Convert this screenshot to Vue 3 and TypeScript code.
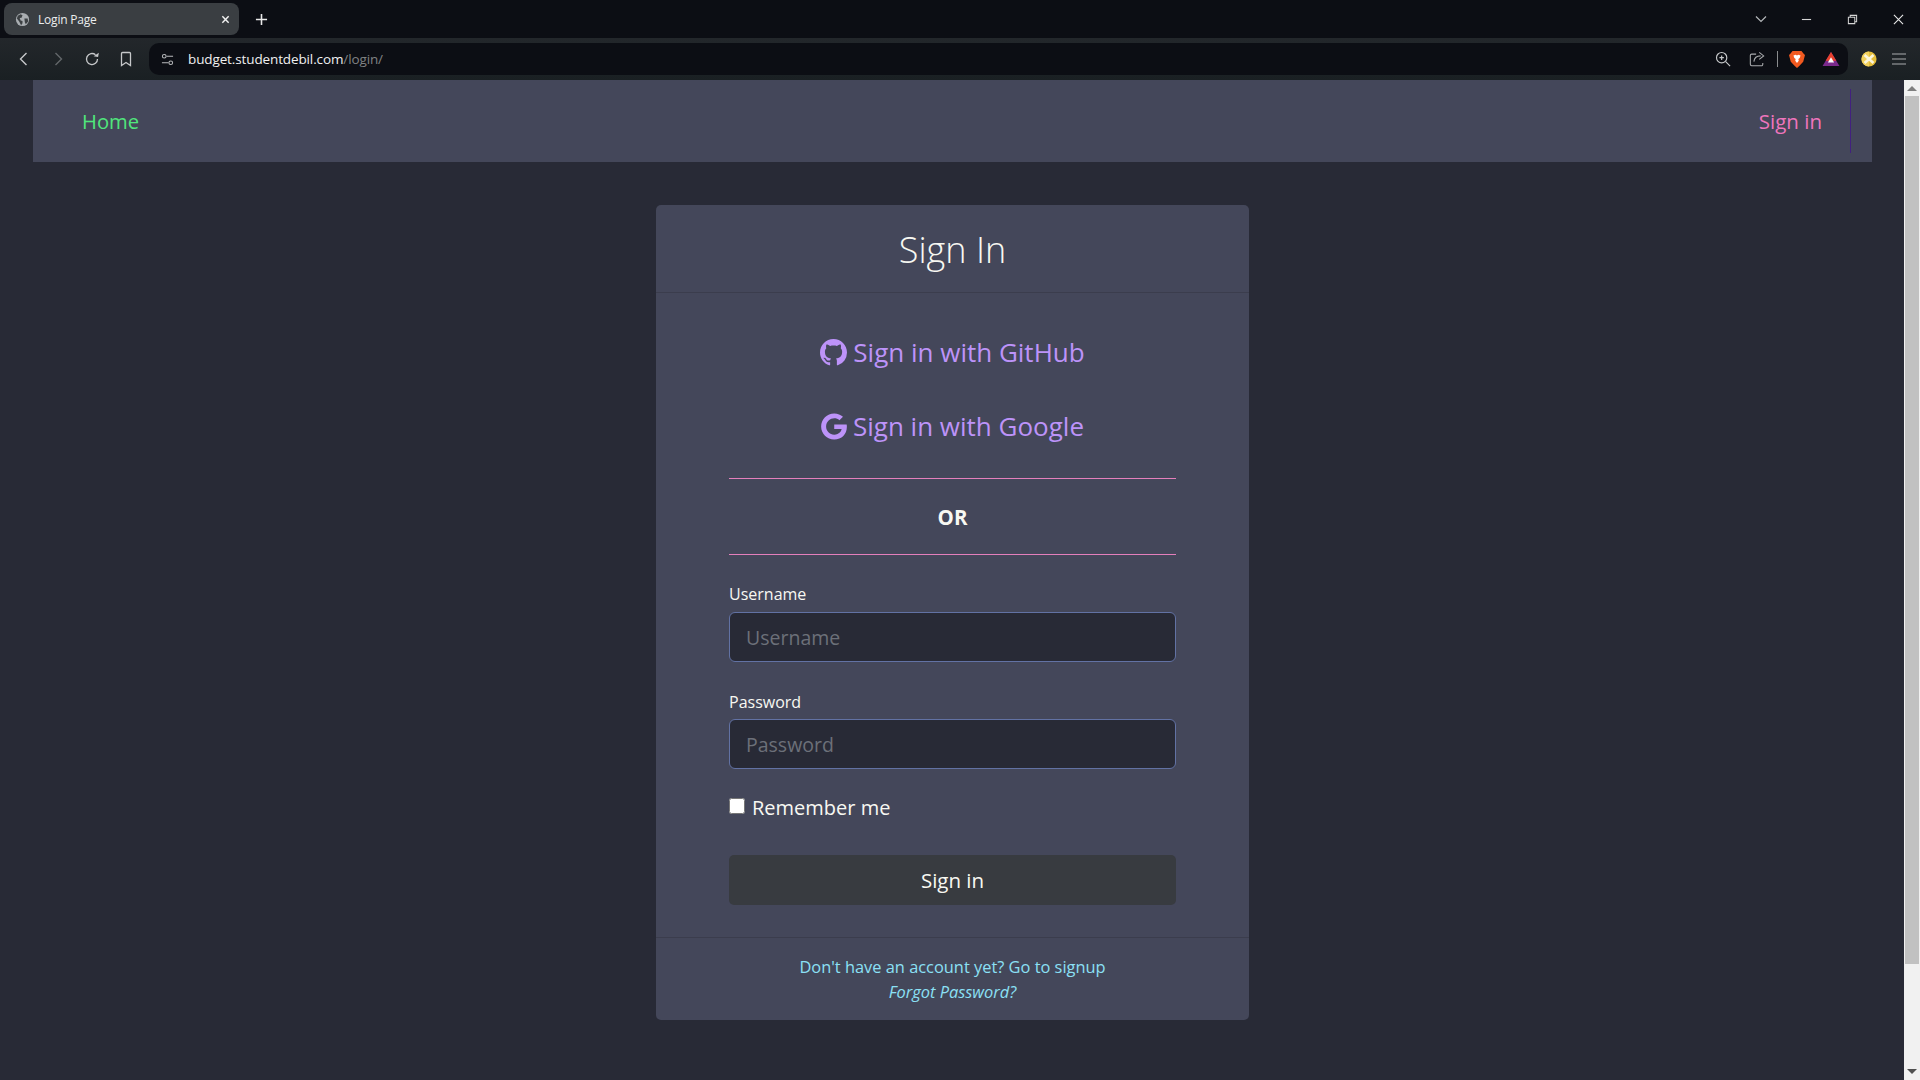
<script setup lang="ts">
import { ref } from 'vue'
const username = ref<string>('')
const password = ref<string>('')
const remember = ref<boolean>(false)
</script>

<template>
  <div class="window">
    <div class="tabstrip">
      <div class="tab">
        <svg class="globe" viewBox="0 0 16 16"><circle cx="8" cy="8" r="7" fill="#a9adb1"/><path d="M3 4l3-1.500 2 1-1 2.500-2 .5 1 2.500 2 .5 0 2.500-1.500 2L4.500 10 2 7z M10 7h3.500l.5 3-2.500 3-1-2z" fill="#3c4043"/></svg>
        <span class="tab-title">Login Page</span>
        <svg class="tab-x" viewBox="0 0 10 10"><path d="M1.500 1.500l7 7M8.500 1.500l-7 7" stroke="#f2f2f2" stroke-width="1.600"/></svg>
      </div>
      <svg class="plus" viewBox="0 0 14 14"><path d="M7 1v12M1 7h12" stroke="#e8e8e8" stroke-width="1.700"/></svg>
      <div class="grow"></div>
      <svg class="chev" viewBox="0 0 12 8"><path d="M1 1.500l5 5 5-5" fill="none" stroke="#b4b7ba" stroke-width="1.200"/></svg>
      <svg class="win-btn" viewBox="0 0 12 12"><path d="M1 6h10" stroke="#d5d5d5" stroke-width="1.200"/></svg>
      <svg class="win-btn" viewBox="0 0 12 12"><path d="M1.500 3.500h7v7h-7zM3.500 3.500V1.500h7v7h-2" fill="none" stroke="#d5d5d5" stroke-width="1.100"/></svg>
      <svg class="win-btn last" viewBox="0 0 12 12"><path d="M1 1l10 10M11 1L1 11" stroke="#e8e8e8" stroke-width="1.200"/></svg>
    </div>

    <div class="toolbar">
      <svg class="tool" viewBox="0 0 16 16"><path d="M10.500 2L4.500 8l6 6" fill="none" stroke="#c6c8ca" stroke-width="1.400"/></svg>
      <svg class="tool" viewBox="0 0 16 16"><path d="M5.500 2l6 6-6 6" fill="none" stroke="#63676a" stroke-width="1.400"/></svg>
      <svg class="tool" viewBox="0 0 16 16"><path d="M13.500 8A5.500 5.500 0 1 1 11.500 3.800" fill="none" stroke="#c6c8ca" stroke-width="1.300"/><path d="M9.500 5.500h5v-5z" fill="#c6c8ca" transform="rotate(10 12 4) scale(.9) translate(1.500 .8)"/></svg>
      <svg class="tool" viewBox="0 0 16 16"><path d="M3.500 2.500a1 1 0 0 1 1-1h7a1 1 0 0 1 1 1v12L8 11.500 3.500 14.500z" fill="none" stroke="#c6c8ca" stroke-width="1.300"/></svg>
      <div class="address">
        <svg class="tune" viewBox="0 0 14 14"><g fill="none" stroke="#b9bbbd" stroke-width="1.100"><circle cx="3.500" cy="3.500" r="2"/><path d="M6 3.500h7M1 10.500h7"/><circle cx="10.500" cy="10.500" r="2"/></g></svg>
        <span class="url">budget.studentdebil.com<span class="url-path">/login/</span></span>
        <div class="grow"></div>
        <svg class="addr-icon" viewBox="0 0 18 18"><g fill="none" stroke="#c6c8ca" stroke-width="1.300"><circle cx="7.500" cy="7.500" r="5.800"/><path d="M12 12l5 5M7.500 5v5M5 7.500h5"/></g></svg>
        <svg class="addr-icon share" viewBox="0 0 18 18"><path d="M8 3.500H3a1.500 1.500 0 0 0-1.500 1.500v10a1.500 1.500 0 0 0 1.500 1.500h11a1.500 1.500 0 0 0 1.500-1.500v-1.500M5.500 12C6 7.500 9 5.500 13 5.500M11.500 1.500l5 4-5 4" fill="none" stroke="#a9abad" stroke-width="1.200"/></svg>
        <div class="addr-sep"></div>
        <svg class="brave" viewBox="0 0 18 20"><path d="M4 1h10l2.500 3L18 5.500 16 13l-4.500 5L9 20l-2.500-2L2 13 0 5.500 1.500 4z" fill="#f1591f"/><path d="M5 6l2.500-.8L9 6l1.500-.8L13 6l-1 3-1.500 1L11 12l-2 2.500L7 12l.500-2L6 9z" fill="#fff"/></svg>
        <svg class="bat" viewBox="0 0 20 18"><path d="M10 1l9.500 16H.5z" fill="#7b2a8c"/><path d="M10 1l6 10H4z" fill="#e8412c"/><path d="M10 7l3.500 6h-7z" fill="#fff"/></svg>
      </div>
      <svg class="wallet" viewBox="0 0 18 18"><circle cx="9" cy="9" r="8.500" fill="#e5bd3a"/><path d="M9 .5A8.500 8.500 0 0 0 .5 9 8.500 8.500 0 0 0 9 17.500z" fill="#f2d15c"/><path d="M4 4.500l10 9M14 4.500l-10 9" stroke="#fbf6dc" stroke-width="3"/></svg>
      <svg class="menu" viewBox="0 0 14 12"><path d="M0 1h14M0 6h14M0 11h14" stroke="#a9abad" stroke-width="1.100"/></svg>
    </div>

    <div class="viewport">
      <div class="page">
        <nav class="navbar">
          <a class="nav-home">Home</a>
          <div class="grow"></div>
          <a class="nav-signin">Sign in</a>
          <div class="nav-rule"></div>
        </nav>

        <div class="card">
          <header class="card-head">
            <h1>Sign In</h1>
          </header>

          <div class="card-body">
            <a class="social first">
              <svg class="gh" viewBox="0 0 16 16"><path fill="currentColor" d="M8 0C3.580 0 0 3.580 0 8c0 3.540 2.290 6.530 5.470 7.590.4.070.55-.17.55-.38 0-.19-.01-.82-.01-1.490-2.010.37-2.530-.49-2.690-.94-.09-.23-.48-.94-.82-1.130-.28-.15-.68-.52-.01-.53.63-.01 1.080.58 1.230.82.72 1.210 1.870.87 2.330.66.070-.52.28-.87.51-1.070-1.780-.2-3.640-.89-3.640-3.950 0-.87.31-1.590.82-2.150-.08-.2-.36-1.020.08-2.120 0 0 .67-.21 2.200.82.64-.18 1.320-.27 2-.27.68 0 1.360.09 2 .27 1.530-1.040 2.200-.82 2.200-.82.44 1.100.16 1.920.08 2.120.51.56.82 1.270.82 2.150 0 3.070-1.870 3.750-3.650 3.950.29.25.54.73.54 1.480 0 1.070-.01 1.930-.01 2.200 0 .21.15.46.55.38A8.013 8.013 0 0 0 16 8c0-4.420-3.580-8-8-8z"/></svg>
              <span>Sign in with GitHub</span>
            </a>
            <a class="social">
              <svg class="gg" viewBox="0 0 488 512"><path fill="currentColor" d="M488 261.800C488 403.300 391.100 504 248 504 110.800 504 0 393.200 0 256S110.800 8 248 8c66.800 0 123 24.500 166.300 64.900l-67.500 64.900C258.500 52.600 94.300 116.600 94.300 256c0 86.500 69.100 156.600 153.700 156.600 98.200 0 135-70.400 140.800-106.900H248v-85.300h236.100c2.300 12.700 3.900 24.900 3.900 41.400z"/></svg>
              <span>Sign in with Google</span>
            </a>

            <div class="or">OR</div>

            <label class="field-label" for="u">Username</label>
            <input id="u" v-model="username" class="input" type="text" placeholder="Username" />

            <label class="field-label second" for="p">Password</label>
            <input id="p" v-model="password" class="input" type="password" placeholder="Password" />

            <label class="remember">
              <input v-model="remember" class="check" type="checkbox" />
              <span>Remember me</span>
            </label>

            <button class="submit" type="button">Sign in</button>
          </div>

          <footer class="card-foot">
            <a class="foot-link">Don't have an account yet? Go to signup</a>
            <a class="foot-link italic">Forgot Password?</a>
          </footer>
        </div>
      </div>

      <div class="scrollbar">
        <div class="arrow up"></div>
        <div class="thumb"></div>
        <div class="grow"></div>
        <div class="arrow down"></div>
      </div>
    </div>
  </div>
</template>

<style>
html, body { margin: 0; background: #282a36; overflow: hidden; }
</style>

<style scoped>
.window {
  width: 1920px;
  height: 1080px;
  display: flex;
  flex-direction: column;
  overflow: hidden;
  font-family: "Open Sans", "Noto Sans", sans-serif;
}
.grow { flex: 1; }

.tabstrip {
  height: 38px;
  flex: none;
  box-sizing: border-box;
  padding: 3px 0 3px 4px;
  display: flex;
  align-items: center;
  background: #0c0e14;
}
.tab {
  width: 235px;
  height: 32px;
  box-sizing: border-box;
  padding: 0 7px 0 11px;
  display: flex;
  align-items: center;
  border-radius: 8px;
  background: #3a3e42;
}
.globe { width: 15px; height: 15px; flex: none; }
.tab-title {
  margin-left: 8px;
  flex: 1;
  font-size: 12px;
  letter-spacing: -0.2px;
  color: #eceded;
}
.tab-x { width: 9px; height: 9px; flex: none; margin-right: 2px; }
.plus { width: 13px; height: 13px; margin-left: 16px; flex: none; }
.chev { width: 12px; height: 8px; margin-right: 34px; flex: none; }
.win-btn { width: 11px; height: 11px; margin-right: 35px; flex: none; }
.win-btn.last { margin-right: 16px; }

.toolbar {
  height: 42px;
  flex: none;
  box-sizing: border-box;
  padding: 0 0 0 16px;
  display: flex;
  align-items: center;
  background: linear-gradient(#23272b, #1a2023);
}
.tool { width: 16px; height: 16px; margin-right: 18px; flex: none; }
.tool:nth-child(4) { margin-right: 15px; }
.address {
  width: 1699px;
  height: 32px;
  flex: none;
  box-sizing: border-box;
  padding: 0 8px 0 12px;
  display: flex;
  align-items: center;
  border-radius: 10px;
  background: #0c0e14;
}
.tune { width: 13px; height: 13px; flex: none; }
.url {
  margin-left: 14px;
  font-size: 13.500px;
  letter-spacing: -0.12px;
  color: #f0f0f0;
}
.url-path { color: #808284; }
.addr-icon { width: 16px; height: 16px; margin-right: 18px; flex: none; }
.addr-icon.share { margin-right: 12px; }
.addr-sep { width: 1px; height: 16px; background: #8a8c8e; margin-right: 11px; }
.brave { width: 16px; height: 18px; margin-right: 17px; flex: none; }
.bat { width: 18px; height: 16px; flex: none; }
.wallet { width: 16px; height: 16px; margin-left: 13px; flex: none; }
.menu { width: 14px; height: 12px; margin-left: 15px; flex: none; }

.viewport {
  flex: 1;
  min-height: 0;
  display: flex;
  background: #282a36;
}
.page {
  flex: 1;
  min-width: 0;
  box-sizing: border-box;
  padding: 0 32px 0 33px;
  display: flex;
  flex-direction: column;
  align-items: center;
}
.navbar {
  width: 100%;
  height: 82px;
  flex: none;
  box-sizing: border-box;
  padding: 0 21px 0 49px;
  display: flex;
  align-items: center;
  background: #44475a;
  font-size: 20.500px;
}
.nav-home { color: #50e67c; font-size: 20.200px; }
.nav-signin { color: #ef75bd; }
.nav-rule { width: 1px; height: 64px; margin-left: 28px; background: #42207f; }

.card {
  width: 593px;
  margin-top: 43px;
  height: 815px;
  flex: none;
  display: flex;
  flex-direction: column;
  border-radius: 5px;
  background: #44475a;
}
.card-head {
  height: 88px;
  flex: none;
  padding-top: 2px;
  display: flex;
  align-items: center;
  justify-content: center;
  border-bottom: 1px solid #3b3d4d;
  box-sizing: border-box;
}
h1 {
  margin: 0;
  font-size: 36px;
  font-weight: 300;
  color: #f8f8f2;
}
.card-body {
  flex: 1;
  box-sizing: border-box;
  padding: 0 73px;
  display: flex;
  flex-direction: column;
}
.social {
  height: 40px;
  margin-top: 34px;
  display: flex;
  align-items: center;
  justify-content: center;
  gap: 6px;
  font-size: 26px;
  color: #bd93f9;
}
.social.first { margin-top: 39px; }
.gh { width: 27px; height: 27px; }
.gg { width: 26px; height: 27px; }

.or {
  margin-top: 32px;
  height: 77px;
  box-sizing: border-box;
  display: flex;
  align-items: center;
  justify-content: center;
  border-top: 1px solid #e57fbc;
  border-bottom: 1px solid #e57fbc;
  font-size: 20.500px;
  font-weight: 700;
  color: #f8f8f2;
}
.field-label {
  margin-top: 27px;
  margin-bottom: 6px;
  height: 24px;
  display: flex;
  align-items: center;
  font-size: 16px;
  color: #f8f8f2;
}
.field-label.second { margin-top: 28px; margin-bottom: 5px; }
.input {
  width: 100%;
  height: 50px;
  box-sizing: border-box;
  padding: 0 16px;
  border: 1px solid #6272a4;
  border-radius: 6px;
  background: #282a36;
  color: #f8f8f2;
  font-family: inherit;
  font-size: 19.500px;
  outline: none;
}
.input::placeholder { color: #6c7079; opacity: 1; }
.remember {
  margin-top: 25px;
  height: 26px;
  display: flex;
  align-items: center;
  gap: 7px;
  font-size: 20px;
  color: #f8f8f2;
}
.check {
  width: 16px;
  height: 16px;
  margin: 0;
  flex: none;
  position: relative;
  top: -1px;
}
.submit {
  width: 100%;
  height: 50px;
  margin-top: 35px;
  border: 0;
  border-radius: 5px;
  background: #383b40;
  color: #f8f8f2;
  font-family: inherit;
  font-size: 20.500px;
}
.card-foot {
  height: 83px;
  flex: none;
  box-sizing: border-box;
  padding-top: 16px;
  display: flex;
  flex-direction: column;
  align-items: center;
  border-top: 1px solid #3b3d4d;
}
.foot-link {
  height: 25px;
  line-height: 25px;
  font-size: 16.400px;
  color: #8be0f5;
}
.foot-link.italic { font-style: italic; }

.scrollbar {
  width: 16px;
  flex: none;
  display: flex;
  flex-direction: column;
  align-items: center;
  background: #f1f1f1;
}
.arrow { width: 0; height: 0; flex: none; border-left: 5px solid transparent; border-right: 5px solid transparent; }
.arrow.up { margin: 6px 0 5px; border-bottom: 5px solid #7f7f7f; }
.arrow.down { margin: 5px 0 6px; border-top: 5px solid #505050; }
.thumb { width: 14px; height: 868px; flex: none; background: #c1c1c1; }
</style>
